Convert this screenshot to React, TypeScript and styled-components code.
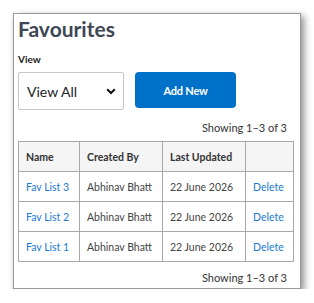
import React from "react";
import styled, { createGlobalStyle } from "styled-components";

const GlobalStyle = createGlobalStyle`
  html, body {
    margin: 0;
    padding: 0;
    background: #ffffff;
  }
  body {
    font-family: "Lato", "Liberation Sans", sans-serif;
    color: #333;
  }
`;

const Page = styled.div`
  padding: 13px 0 0 13px;
`;

const Panel = styled.div`
  box-sizing: border-box;
  width: 288px;
  height: 276px;
  background: #fff;
  border: 1px solid #9a9a9a;
  box-shadow: 3px 3px 7px rgba(0, 0, 0, 0.45);
  padding: 2px 7px 0 4px;
  display: flex;
  flex-direction: column;
`;

const Title = styled.h1`
  margin: 0;
  font-size: 21px;
  font-weight: 700;
  color: #3e4753;
  line-height: 26px;
`;

const Label = styled.label`
  margin-top: 11px;
  font-size: 10px;
  font-weight: 700;
  color: #222;
  line-height: 12px;
`;

const Controls = styled.div`
  display: flex;
  align-items: flex-start;
  gap: 11px;
  margin-top: 7px;
`;

const SelectBox = styled.div`
  box-sizing: border-box;
  width: 106px;
  height: 38px;
  border: 1px solid #c8c8c8;
  border-radius: 2px;
  display: flex;
  align-items: center;
  justify-content: space-between;
  padding: 0 7px 0 8px;
  font-size: 14px;
  color: #222;
`;

const AddButton = styled.button`
  box-sizing: border-box;
  width: 101px;
  height: 36px;
  border: none;
  border-radius: 4px;
  background: #0071c8;
  color: #fff;
  font-family: inherit;
  font-size: 11px;
  font-weight: 700;
  letter-spacing: -0.2px;
`;

const Showing = styled.div<{ $top: number }>`
  text-align: right;
  font-size: 11px;
  color: #333;
  padding-right: 6px;
  line-height: 14px;
  margin-top: ${(p) => p.$top}px;
`;

const Table = styled.table`
  border-collapse: collapse;
  margin-top: 6px;
  width: 276px;
  font-size: 10.5px;
  table-layout: fixed;
`;

const Th = styled.th`
  background: #f5f5f5;
  border: 1px solid #a8a8a8;
  height: 29px;
  padding: 0 0 0 7px;
  text-align: left;
  font-weight: 700;
  color: #333;
`;

const Td = styled.td`
  border: 1px solid #a8a8a8;
  height: 29px;
  padding: 0 0 0 7px;
  color: #444;
  white-space: nowrap;
`;

const Link = styled.a`
  color: #1b7bd0;
  text-decoration: none;
`;

const Chevron = () => (
  <svg width="10" height="7" viewBox="0 0 10 7">
    <path d="M1.2 1.2 L5 5 L8.8 1.2" stroke="#111" strokeWidth="2" fill="none" />
  </svg>
);

const rows = ["Fav List 3", "Fav List 2", "Fav List 1"];

export default function App() {
  return (
    <>
      <GlobalStyle />
      <Page>
        <Panel>
          <Title>Favourites</Title>
          <Label>View</Label>
          <Controls>
            <SelectBox>
              <span>View All</span>
              <Chevron />
            </SelectBox>
            <AddButton>Add New</AddButton>
          </Controls>
          <Showing $top={11}>Showing 1–3 of 3</Showing>
          <Table>
            <colgroup>
              <col style={{ width: 61 }} />
              <col style={{ width: 83 }} />
              <col style={{ width: 83 }} />
              <col style={{ width: 48 }} />
            </colgroup>
            <thead>
              <tr>
                <Th>Name</Th>
                <Th>Created By</Th>
                <Th>Last Updated</Th>
                <Th></Th>
              </tr>
            </thead>
            <tbody>
              {rows.map((r) => (
                <tr key={r}>
                  <Td>
                    <Link href="#">{r}</Link>
                  </Td>
                  <Td>Abhinav Bhatt</Td>
                  <Td>22 June 2026</Td>
                  <Td>
                    <Link href="#">Delete</Link>
                  </Td>
                </tr>
              ))}
            </tbody>
          </Table>
          <Showing $top={9}>Showing 1–3 of 3</Showing>
        </Panel>
      </Page>
    </>
  );
}
